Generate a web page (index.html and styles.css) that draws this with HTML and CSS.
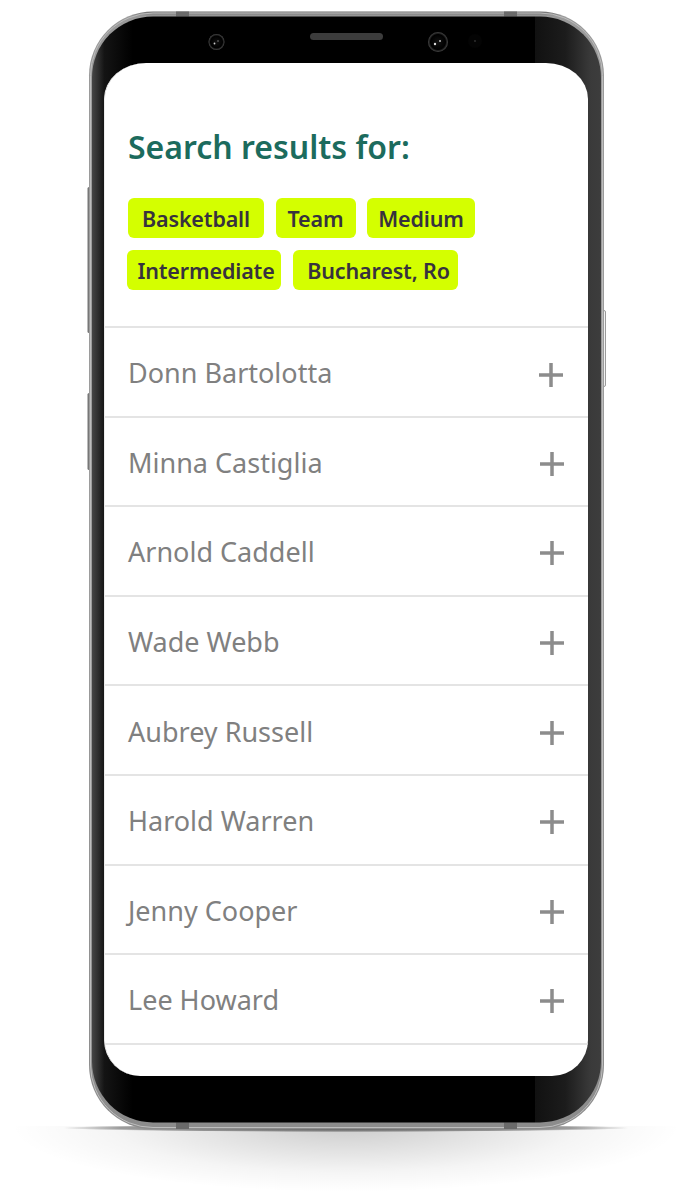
FILE: index.html
```html
<!DOCTYPE html>
<html lang="en">
<head>
<meta charset="utf-8">
<title>Search results</title>
<link rel="stylesheet" href="styles.css">
</head>
<body>
<svg class="device" viewBox="0 0 692 1199" width="692" height="1199" aria-hidden="true">
  <defs>
    <radialGradient id="shadow" gradientUnits="userSpaceOnUse" cx="0" cy="0" r="1" gradientTransform="translate(346 1126) scale(335 66)">
      <stop offset="0" stop-color="#000" stop-opacity=".2"/>
      <stop offset=".35" stop-color="#000" stop-opacity=".12"/>
      <stop offset=".7" stop-color="#000" stop-opacity=".04"/>
      <stop offset="1" stop-color="#000" stop-opacity="0"/>
    </radialGradient>
    <radialGradient id="contact" cx="0.5" cy="0.5" r="0.5">
      <stop offset="0" stop-color="#000" stop-opacity=".55"/>
      <stop offset=".8" stop-color="#000" stop-opacity=".36"/>
      <stop offset="1" stop-color="#000" stop-opacity="0"/>
    </radialGradient>
    <linearGradient id="rim" x1="0" y1="0" x2="0" y2="1">
      <stop offset="0" stop-color="#6e6e6e"/>
      <stop offset=".004" stop-color="#9a9a9a"/>
      <stop offset=".5" stop-color="#9c9c9c"/>
      <stop offset="1" stop-color="#8c8c8c"/>
    </linearGradient>
    <linearGradient id="glass" x1="92" y1="0" x2="601" y2="0" gradientUnits="userSpaceOnUse">
      <stop offset="0" stop-color="#454545"/>
      <stop offset=".012" stop-color="#2e2e2e"/>
      <stop offset=".024" stop-color="#141414"/>
      <stop offset=".08" stop-color="#000"/>
      <stop offset=".871" stop-color="#000"/>
      <stop offset=".871" stop-color="#111"/>
      <stop offset=".93" stop-color="#1c1c1c"/>
      <stop offset=".98" stop-color="#3a3a3a"/>
      <stop offset="1" stop-color="#3d3d3d"/>
    </linearGradient>
    <radialGradient id="lens" cx="0.5" cy="0.5" r="0.5">
      <stop offset="0" stop-color="#111"/>
      <stop offset=".75" stop-color="#000"/>
      <stop offset="1" stop-color="#4a4a4a"/>
    </radialGradient>
  </defs>
  <rect x="0" y="1126" width="692" height="73" fill="url(#shadow)"/>
  <ellipse cx="346" cy="1128" rx="285" ry="4" fill="url(#contact)"/>
  <rect x="87.500" y="187" width="3" height="146" rx="1.500" fill="#777"/>
  <rect x="87.500" y="393" width="3" height="77" rx="1.500" fill="#777"/>
  <rect x="602.500" y="310.500" width="3" height="76" rx="1.500" fill="#f2f2f2" stroke="#9a9a9a" stroke-width="1"/>
  <rect x="89" y="11.5" width="515" height="1117.5" rx="64" fill="url(#rim)"/>
  <rect x="90.500" y="13" width="512" height="1114.500" rx="62.500" fill="none" stroke="#bdbdbd" stroke-width="1"/>
  <rect x="176" y="11.5" width="13" height="5" fill="#6a6a6a"/>
  <rect x="504" y="11.5" width="13" height="5" fill="#6a6a6a"/>
  <rect x="176" y="1122.5" width="13" height="6.5" fill="#6a6a6a"/>
  <rect x="504" y="1122.5" width="13" height="6.5" fill="#6a6a6a"/>
  <rect x="92" y="16.5" width="509" height="1106" rx="61" fill="url(#glass)"/>
  <rect x="310" y="33" width="73" height="7" rx="3.5" fill="#3c3c3c"/>
  <circle cx="216.500" cy="42" r="8" fill="url(#lens)"/>
  <circle cx="214.500" cy="43.500" r=".9" fill="#ccc"/>
  <circle cx="218" cy="41" r=".7" fill="#999"/>
  <circle cx="438" cy="42" r="10" fill="url(#lens)"/>
  <circle cx="435" cy="44" r="1.200" fill="#ddd"/>
  <circle cx="440" cy="41" r="1" fill="#bbb"/>
  <circle cx="475" cy="41" r="7" fill="#040404"/>
  <circle cx="475" cy="41" r=".9" fill="#333"/>
</svg>

<main class="screen">
  <header class="summary">
    <h1 class="title">Search results for:</h1>
    <div class="tags">
      <div class="tag-row tag-row-first">
        <span class="tag tag-basketball">Basketball</span>
        <span class="tag tag-team">Team</span>
        <span class="tag tag-medium">Medium</span>
      </div>
      <div class="tag-row">
        <span class="tag tag-intermediate">Intermediate</span>
        <span class="tag tag-bucharest">Bucharest, Ro</span>
      </div>
    </div>
  </header>
  <ul class="people">
    <li class="person person-first"><span class="name">Donn Bartolotta</span><svg class="plus" viewBox="0 0 24 24" aria-hidden="true"><path d="M12 0v24M0 12h24"/></svg></li>
    <li class="person"><span class="name">Minna Castiglia</span><svg class="plus" viewBox="0 0 24 24" aria-hidden="true"><path d="M12 0v24M0 12h24"/></svg></li>
    <li class="person"><span class="name">Arnold Caddell</span><svg class="plus" viewBox="0 0 24 24" aria-hidden="true"><path d="M12 0v24M0 12h24"/></svg></li>
    <li class="person"><span class="name">Wade Webb</span><svg class="plus" viewBox="0 0 24 24" aria-hidden="true"><path d="M12 0v24M0 12h24"/></svg></li>
    <li class="person"><span class="name">Aubrey Russell</span><svg class="plus" viewBox="0 0 24 24" aria-hidden="true"><path d="M12 0v24M0 12h24"/></svg></li>
    <li class="person"><span class="name">Harold Warren</span><svg class="plus" viewBox="0 0 24 24" aria-hidden="true"><path d="M12 0v24M0 12h24"/></svg></li>
    <li class="person"><span class="name">Jenny Cooper</span><svg class="plus" viewBox="0 0 24 24" aria-hidden="true"><path d="M12 0v24M0 12h24"/></svg></li>
    <li class="person"><span class="name">Lee Howard</span><svg class="plus" viewBox="0 0 24 24" aria-hidden="true"><path d="M12 0v24M0 12h24"/></svg></li>
    <li class="person person-cut"></li>
  </ul>
</main>
</body>
</html>
```

FILE: styles.css
```css
* { box-sizing: border-box; }
html, body { margin: 0; padding: 0; background: #fff; }
body {
  position: relative;
  width: 692px;
  height: 1199px;
  overflow: hidden;
  padding: 63px 104px 0;
  font-family: "Noto Sans", "Open Sans", sans-serif;
}
.device { position: absolute; left: 0; top: 0; display: block; }
.screen {
  position: relative;
  width: 484px;
  height: 1013px;
  background: #fff;
  border-radius: 42px 42px 36px 36px / 36px;
  overflow: hidden;
  border-left: 1px solid #ececec;
}
.summary { padding: 64px 0 0 23px; height: 263px; }
.title {
  margin: 0;
  font-size: 32px;
  line-height: 40px;
  font-weight: 600;
  color: #1c6b5d;
}
.tags { margin-top: 31px; display: flex; flex-direction: column; gap: 12px; }
.tag-row { display: flex; gap: 12px; }
.tag-row-first { gap: 11.500px; }
.tag {
  height: 40px;
  display: flex;
  align-items: center;
  justify-content: center;
  background: #d4ff00;
  border-radius: 6px;
  color: #37323e;
  font-size: 21.500px;
  font-weight: 600;
  letter-spacing: -.15px;
  white-space: nowrap;
}
.tag-basketball { width: 136px; }
.tag-team { width: 80px; }
.tag-medium { width: 108px; }
.tag-intermediate { width: 154px; margin-left: -1px; padding-left: 4px; }
.tag-bucharest { width: 165px; padding-left: 6px; }
.people { list-style: none; margin: 0; padding: 0; }
.person {
  height: 89.600px;
  border-top: 2px solid #e4e4e4;
  display: flex;
  align-items: center;
  justify-content: space-between;
  padding: 5px 24px 0 23px;
}
.name {
  font-size: 27px;
  line-height: 36px;
  color: #808080;
  position: relative;
  top: -1px;
}
.plus { width: 24px; height: 24px; display: block; flex: none; }
.plus path { fill: none; stroke: #8c8c8c; stroke-width: 3.500; }
.person-first .plus { margin-right: 1px; margin-top: 1px; }
```
